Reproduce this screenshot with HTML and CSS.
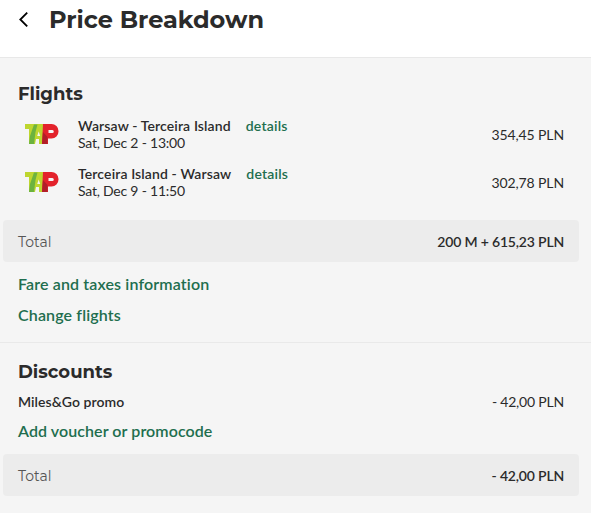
FILE: index.html
```html
<!DOCTYPE html>
<html lang="en">
<head>
<meta charset="utf-8">
<title>Price Breakdown</title>
<link rel="stylesheet" href="styles.css">
</head>
<body>
<svg width="0" height="0" class="sprite" aria-hidden="true">
  <symbol id="tap" viewBox="0 0 34 21">
    <path fill="#bed62f" d="M0 0h18v20h-4v-5h-3l-1 5H4V5H0z"/>
    <path fill="#6cb33f" d="M9 0.500h3.500L10.500 8 9 20H4l1-8z"/>
    <path fill="#e3222b" d="M18 0h8.500a7 7.200 0 0 1 0 14.500H23V20h-6z"/>
    <path fill="#b11f29" d="M18 8l4.500 5v7H17z"/>
    <path fill="#f5f5f5" d="M13.700 7.500l1.500 4.500h-3zM23.500 6h3.800a1.500 1.500 0 0 1 0 3h-3.800z"/>
  </symbol>
</svg>
<header class="header">
  <svg class="back" viewBox="0 0 10 16"><path d="M8.500 1.500L2 8l6.500 6.500"/></svg>
  <h1>Price Breakdown</h1>
</header>
<section class="flights">
  <h2>Flights</h2>
  <div class="flight">
    <svg class="logo"><use href="#tap"/></svg>
    <div class="info"><div><b class="route">Warsaw - Terceira Island</b><a class="details">details</a></div><div class="date">Sat, Dec 2 - 13:00</div></div>
    <span class="price">354,45 PLN</span>
  </div>
  <div class="flight">
    <svg class="logo"><use href="#tap"/></svg>
    <div class="info"><div><b class="route">Terceira Island - Warsaw</b><a class="details">details</a></div><div class="date">Sat, Dec 9 - 11:50</div></div>
    <span class="price">302,78 PLN</span>
  </div>
  <div class="total"><span class="label">Total</span><b class="sum">200 M + 615,23 PLN</b></div>
  <a class="link">Fare and taxes information</a>
  <a class="link">Change flights</a>
</section>
<section class="discounts">
  <h2>Discounts</h2>
  <div class="promo"><b>Miles&amp;Go promo</b><span class="price">- 42,00 PLN</span></div>
  <a class="link">Add voucher or promocode</a>
  <div class="total"><span class="label">Total</span><b class="sum">- 42,00 PLN</b></div>
</section>
</body>
</html>
```
FILE: styles.css
```css
* { box-sizing: border-box; }
body { margin: 0; height: 513px; overflow: hidden; background: #f5f5f5; color: #2b2b2b; font: 14px/17px Lato, sans-serif; }
.sprite { display: block; }
b { font-weight: 600; }
h1, h2 { margin: 0; font-family: Montserrat, Inter, sans-serif; font-weight: 700; }
.header { display: flex; height: 58px; padding-left: 18px; background: #fff; border-bottom: 1px solid #e8e8e8; }
.back { width: 11px; height: 17px; margin: 11px 20px 0 0; fill: none; stroke: #000; stroke-width: 1.700; }
h1 { font-size: 24px; line-height: 40px; }
h2 { font-size: 18px; line-height: 24px; padding-left: 18px; }
.flights { height: 285px; padding-top: 24px; border-bottom: 1px solid #e9e9e9; }
.flights h2 { margin-bottom: 11px; }
.flight { display: flex; height: 48px; padding: 0 27px 0 25px; }
.logo { width: 34px; height: 21px; margin: 7px 19px 0 0; }
.info { flex: 1; }
.route { letter-spacing: .12px; }
.date { letter-spacing: -.22px; }
.details { margin-left: 15px; font-weight: 600; letter-spacing: .2px; color: #216e4e; }
.price { line-height: 36px; letter-spacing: -.12px; }
.total { display: flex; justify-content: space-between; height: 42px; margin: 7px 12px 6px 3px; padding: 1px 15px 0; border-radius: 4px; background: #ececec; line-height: 41px; }
.sum { letter-spacing: -.18px; }
.label { font: 14px/42px Montserrat, Inter, sans-serif; color: #555; }
.link { display: block; height: 31px; padding-left: 18px; font-size: 16px; line-height: 31px; font-weight: 600; letter-spacing: .14px; color: #216e4e; }
.discounts { padding-top: 17px; }
.promo { display: flex; justify-content: space-between; height: 32px; padding: 2px 27px 0 18px; line-height: 32px; letter-spacing: .06px; }
.promo .price { line-height: 32px; letter-spacing: -.2px; }
.discounts .link { line-height: 29px; letter-spacing: .08px; }
.discounts .total { margin-top: 7px; }
```
